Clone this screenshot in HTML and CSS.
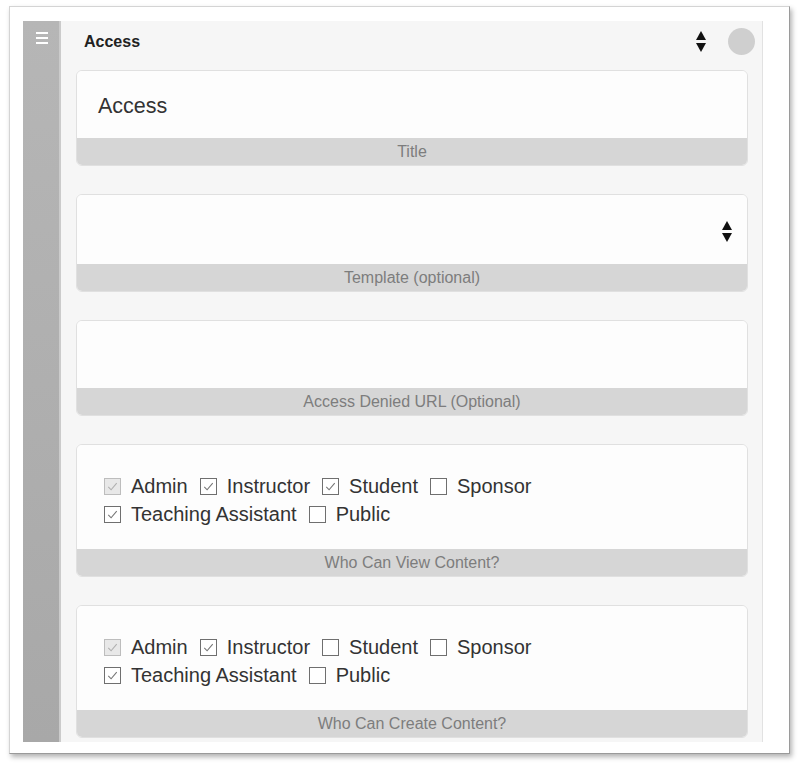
FILE: index.html
```html
<!DOCTYPE html>
<html>
<head>
<meta charset="utf-8">
<link rel="stylesheet" href="styles.css">
</head>
<body>
<div class="window">
  <aside class="sidebar">
    <svg class="burger" width="12" height="14" viewBox="0 0 12 14"><rect x="0" y="1" width="12" height="2" fill="#fff"/><rect x="0" y="6" width="12" height="2" fill="#fff"/><rect x="0" y="11" width="12" height="2" fill="#fff"/></svg>
  </aside>
  <main class="panel">
    <header class="panel-head">
      <span class="panel-title">Access</span>
      <svg class="sorter" width="12" height="24" viewBox="0 0 12 24"><path d="M6 1 L11 10 L1 10 Z" fill="#111"/><path d="M1 13 L11 13 L6 22 Z" fill="#111"/></svg>
      <span class="dot"></span>
    </header>

    <section class="card">
      <div class="card-body text-body h67">Access</div>
      <div class="card-label">Title</div>
    </section>

    <section class="card">
      <div class="card-body select-body h69">
        <svg class="sorter" width="12" height="24" viewBox="0 0 12 24"><path d="M6 1 L11 10 L1 10 Z" fill="#111"/><path d="M1 13 L11 13 L6 22 Z" fill="#111"/></svg>
      </div>
      <div class="card-label">Template (optional)</div>
    </section>

    <section class="card">
      <div class="card-body h67"></div>
      <div class="card-label">Access Denied URL (Optional)</div>
    </section>

    <section class="card">
      <div class="card-body check-body">
        <div class="check-row">
          <span class="cb disabled"><svg viewBox="0 0 16 16"><path d="M3.5 8.5 L6.5 11.5 L12.5 4.5" fill="none" stroke="#b0b0b0" stroke-width="1.2"/></svg></span><span class="lbl">Admin</span>
          <span class="cb"><svg viewBox="0 0 16 16"><path d="M3.5 8.5 L6.5 11.5 L12.5 4.5" fill="none" stroke="#777" stroke-width="1.2"/></svg></span><span class="lbl">Instructor</span>
          <span class="cb"><svg viewBox="0 0 16 16"><path d="M3.5 8.5 L6.5 11.5 L12.5 4.5" fill="none" stroke="#777" stroke-width="1.2"/></svg></span><span class="lbl">Student</span>
          <span class="cb"></span><span class="lbl">Sponsor</span>
        </div>
        <div class="check-row">
          <span class="cb"><svg viewBox="0 0 16 16"><path d="M3.5 8.5 L6.5 11.5 L12.5 4.5" fill="none" stroke="#777" stroke-width="1.2"/></svg></span><span class="lbl">Teaching Assistant</span>
          <span class="cb"></span><span class="lbl">Public</span>
        </div>
      </div>
      <div class="card-label">Who Can View Content?</div>
    </section>

    <section class="card">
      <div class="card-body check-body">
        <div class="check-row">
          <span class="cb disabled"><svg viewBox="0 0 16 16"><path d="M3.5 8.5 L6.5 11.5 L12.5 4.5" fill="none" stroke="#b0b0b0" stroke-width="1.2"/></svg></span><span class="lbl">Admin</span>
          <span class="cb"><svg viewBox="0 0 16 16"><path d="M3.5 8.5 L6.5 11.5 L12.5 4.5" fill="none" stroke="#777" stroke-width="1.2"/></svg></span><span class="lbl">Instructor</span>
          <span class="cb"></span><span class="lbl">Student</span>
          <span class="cb"></span><span class="lbl">Sponsor</span>
        </div>
        <div class="check-row">
          <span class="cb"><svg viewBox="0 0 16 16"><path d="M3.5 8.5 L6.5 11.5 L12.5 4.5" fill="none" stroke="#777" stroke-width="1.2"/></svg></span><span class="lbl">Teaching Assistant</span>
          <span class="cb"></span><span class="lbl">Public</span>
        </div>
      </div>
      <div class="card-label">Who Can Create Content?</div>
    </section>
  </main>
</div>
</body>
</html>
```

FILE: styles.css
```css
* { box-sizing: border-box; }
html, body { margin: 0; padding: 0; background: #fff; }
body {
  font-family: "Liberation Sans", Arial, sans-serif;
  color: #333;
  width: 801px;
  height: 768px;
  overflow: hidden;
}
.window {
  margin: 6px 0 0 9px;
  width: 781px;
  height: 748px;
  background: #fff;
  border: 1px solid #d4d4d4;
  border-right-color: #9a9a9a;
  border-bottom-color: #9a9a9a;
  box-shadow: 2px 3px 5px rgba(0,0,0,0.3);
  padding: 14px 26px 11px 13px;
  display: flex;
}
.sidebar {
  width: 38px;
  flex: none;
  background: linear-gradient(#b6b6b6, #a8a8a8);
  border-right: 2px solid #cbcbcb;
  display: flex;
  justify-content: center;
  padding-top: 10px;
  padding-left: 1px;
}
.burger { display: block; }
.panel {
  flex: none;
  width: 702px;
  background: #f6f6f6;
  border-right: 1px solid #e2e2e2;
  padding: 0 14px 0 15px;
  display: flex;
  flex-direction: column;
  gap: 28px;
  overflow: hidden;
}
.panel-head {
  height: 49px;
  margin-bottom: -28px;
  display: flex;
  align-items: center;
  padding: 0 0 0 7px;
  margin-right: -7px;
  flex: none;
}
.panel-title {
  font-weight: bold;
  font-size: 16px;
  color: #222;
  flex: 1;
  margin-top: -8px;
  padding-left: 1px;
}
.panel-head .sorter { margin-right: 21px; margin-top: -8px; }
.dot {
  width: 27px;
  height: 27px;
  border-radius: 50%;
  background: #cfcfcf;
  margin-top: -8px;
}
.card {
  flex: none;
  background: #fdfdfd;
  border: 1px solid #e0e0e0;
  border-radius: 6px;
  overflow: hidden;
}
.card-body { background: #fdfdfd; }
.h67 { height: 67px; }
.h69 { height: 69px; }
.text-body {
  font-size: 21.5px;
  color: #333;
  padding: 23px 0 0 21px;
  line-height: 24px;
}
.select-body {
  display: flex;
  justify-content: flex-end;
  align-items: center;
  padding-right: 14px;
  padding-top: 4px;
}
.card-label {
  height: 27px;
  background: #d6d6d6;
  color: #7d7d7d;
  font-size: 16px;
  line-height: 27px;
  text-align: center;
}
.check-body {
  padding: 27px 20px 21px 27px;
}
.check-row {
  display: flex;
  align-items: center;
  height: 28px;
  font-size: 20px;
  color: #333;
}
.cb {
  width: 17px;
  height: 17px;
  border: 1px solid #6f6f6f;
  background: #fff;
  flex: none;
  margin-right: 10px;
  display: flex;
  align-items: center;
  justify-content: center;
}
.cb svg { width: 15px; height: 15px; }
.cb.disabled { border-color: #bdbdbd; background: #e8e8e8; }
.lbl { margin-right: 12px; }
```
